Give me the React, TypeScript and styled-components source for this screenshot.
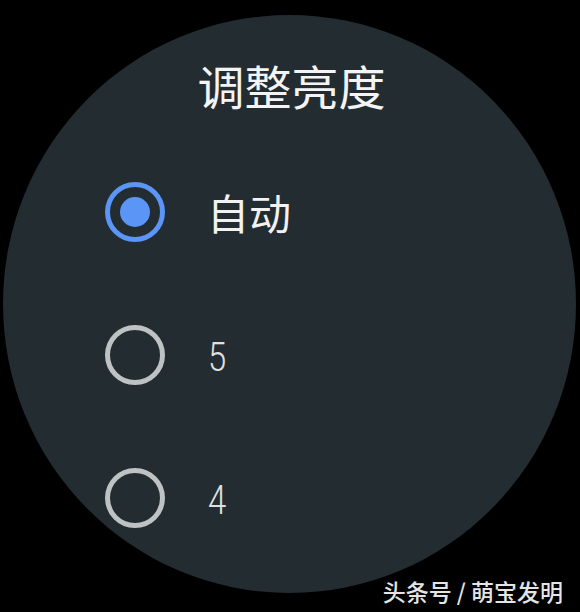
import React from "react";
import styled, { createGlobalStyle } from "styled-components";

const GlobalStyle = createGlobalStyle`
  html, body {
    margin: 0;
    padding: 0;
    background: #000;
  }
  #root {
    width: 580px;
    height: 612px;
    overflow: hidden;
  }
`;

const Screen = styled.div`
  position: relative;
  width: 580px;
  height: 612px;
  background: #000;
  padding: 15px 0 0 3px;
  box-sizing: border-box;
  font-family: Roboto, "Noto Sans CJK SC", sans-serif;
`;

const Watch = styled.div`
  width: 573px;
  height: 578px;
  border-radius: 50%;
  background: #232c31;
  overflow: hidden;
  display: flex;
  flex-direction: column;
  padding-top: 46px;
  box-sizing: border-box;
`;

const Title = styled.div`
  font-family: "Noto Sans CJK SC", sans-serif;
  font-size: 47px;
  line-height: 48px;
  color: #f4f4f4;
  text-align: center;
  padding-left: 4px;
  margin-bottom: 31px;
`;

const List = styled.div`
  display: flex;
  flex-direction: column;
  padding-left: 102px;
`;

const Row = styled.div`
  display: flex;
  align-items: center;
  height: 143px;
`;

const Radio = styled.div<{ $checked?: boolean }>`
  width: 60px;
  height: 60px;
  flex: none;
  box-sizing: border-box;
  border-radius: 50%;
  border: 5px solid ${(p) => (p.$checked ? "#5b95f5" : "#bfc2c2")};
  display: flex;
  align-items: center;
  justify-content: center;
`;

const Dot = styled.div`
  width: 30px;
  height: 30px;
  border-radius: 50%;
  background: #5b95f5;
`;

const Label = styled.span`
  margin-left: 42px;
  font-family: "Noto Sans CJK SC", sans-serif;
  font-size: 42px;
  line-height: 1;
  color: #f2f2f2;
`;

const Digit = styled.span`
  display: inline-block;
  margin-left: 43px;
  margin-top: 5px;
  font-family: Roboto, sans-serif;
  font-size: 41px;
  font-weight: 300;
  line-height: 1;
  color: #e0e0e0;
  transform: scaleX(0.8);
  transform-origin: left center;
`;

const Watermark = styled.div`
  position: absolute;
  right: 17px;
  top: 576px;
  font-family: "Noto Sans CJK SC", sans-serif;
  font-size: 23px;
  font-weight: 500;
  line-height: 30px;
  color: #e4e4e4;
  text-shadow: 0 0 2px rgba(0, 0, 0, 0.7);
  white-space: pre;
`;

const options = [
  { label: "自动", checked: true, cjk: true },
  { label: "5", checked: false, cjk: false },
  { label: "4", checked: false, cjk: false },
];

export default function App() {
  return (
    <>
      <GlobalStyle />
      <Screen>
        <Watch>
          <Title>调整亮度</Title>
          <List>
            {options.map((o) => (
              <Row key={o.label}>
                <Radio $checked={o.checked}>{o.checked && <Dot />}</Radio>
                {o.cjk ? <Label>{o.label}</Label> : <Digit>{o.label}</Digit>}
              </Row>
            ))}
          </List>
        </Watch>
        <Watermark>头条号 / 萌宝发明</Watermark>
      </Screen>
    </>
  );
}
